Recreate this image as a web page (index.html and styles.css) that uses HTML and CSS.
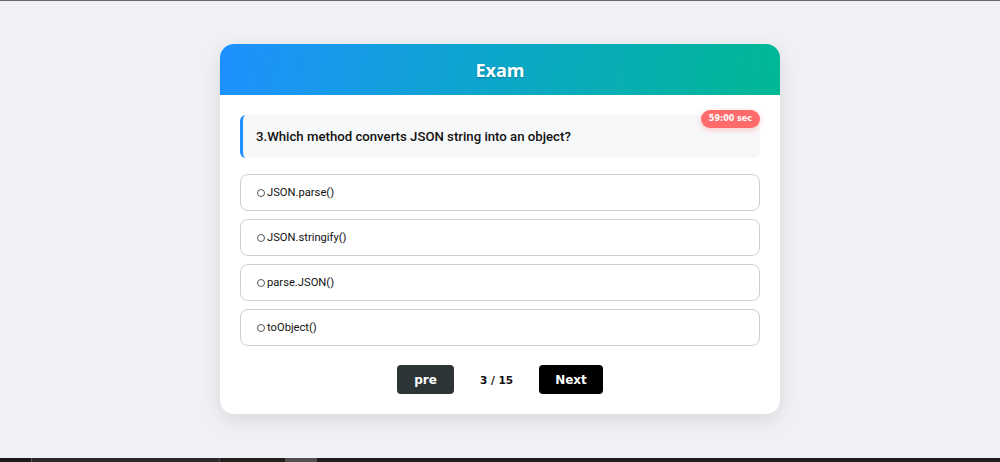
FILE: index.html
```html
<!DOCTYPE html>
<html>
<head>
<meta charset="utf-8">
<link rel="stylesheet" href="styles.css">
</head>
<body>
<div class="page">
  <div class="card">
    <div class="card-header">Exam</div>
    <div class="card-body">
      <span class="timer">59:00 sec</span>
      <div class="question">3.Which method converts JSON string into an object?</div>
      <div class="options">
        <label class="option"><span class="radio"></span>JSON.parse()</label>
        <label class="option"><span class="radio"></span>JSON.stringify()</label>
        <label class="option"><span class="radio"></span>parse.JSON()</label>
        <label class="option"><span class="radio"></span>toObject()</label>
      </div>
      <div class="nav">
        <button class="btn btn-pre">pre</button>
        <span class="count">3 / 15</span>
        <button class="btn btn-next">Next</button>
      </div>
    </div>
  </div>
</div>
<div class="taskbar">
  <span class="tb tb1"></span><span class="tb tb2"></span><span class="tb tb3"></span><span class="tb tb4"></span><span class="tb tb5"></span>
</div>
</body>
</html>
```
FILE: styles.css
```css
* { box-sizing: border-box; }
html, body { margin: 0; padding: 0; }
body {
  background: #f0f1f5;
  font-family: Roboto, "Noto Sans", sans-serif;
  height: 462px;
  display: flex;
  flex-direction: column;
  border-top: 1px solid #6a6a6a;
  overflow: hidden;
}
.page {
  flex: 1;
  display: flex;
  justify-content: center;
  align-items: flex-start;
  padding-top: 43px;
}
.card {
  width: 560px;
  background: #fff;
  border-radius: 14px;
  box-shadow: 0 6px 20px rgba(0, 0, 0, 0.10);
  overflow: hidden;
}
.card-header {
  height: 51px;
  display: flex;
  align-items: center;
  justify-content: center;
  background: linear-gradient(100deg, #1e90ff 0%, #0ea5cf 45%, #00b894 100%);
  color: #fff;
  font-family: "Open Sans", "Noto Sans", sans-serif;
  font-weight: 700;
  font-size: 18px;
  text-shadow: 0 1px 2px rgba(0, 0, 0, 0.25);
}
.card-body {
  position: relative;
  padding: 20px 20px 20px;
}
.timer {
  position: absolute;
  top: 15px;
  right: 20px;
  height: 18px;
  padding: 0 8px;
  border-radius: 9px;
  background: #ff6b6b;
  color: #fff;
  font-family: "DejaVu Sans", Verdana, sans-serif;
  font-weight: 700;
  font-size: 8px;
  line-height: 18px;
  box-shadow: 0 2px 6px rgba(255, 107, 107, 0.35);
}
.question {
  height: 43px;
  display: flex;
  align-items: center;
  padding: 0 13px;
  background: #f7f8fa;
  border-left: 3px solid #1e90ff;
  border-radius: 6px;
  font-size: 13.2px;
  font-weight: 500;
  color: #111;
}
.options {
  margin-top: 16px;
  display: flex;
  flex-direction: column;
  gap: 8px;
}
.option {
  height: 37px;
  display: flex;
  align-items: center;
  padding-left: 16px;
  border: 1px solid #cfcfcf;
  border-radius: 8px;
  font-size: 11.2px;
  color: #111;
}
.radio {
  width: 8px;
  height: 8px;
  border: 1px solid #555;
  border-radius: 50%;
  margin-right: 2px;
  flex: none;
}
.nav {
  margin-top: 19px;
  display: flex;
  justify-content: center;
  align-items: center;
  gap: 26px;
}
.btn {
  height: 29px;
  border: none;
  border-radius: 4px;
  color: #fff;
  font-family: "DejaVu Sans", Verdana, sans-serif;
  font-weight: 700;
  font-size: 12px;
  padding: 0;
}
.btn-pre { width: 57px; background: #2d3436; }
.btn-next { width: 64px; background: #000; }
.count {
  font-family: "DejaVu Sans", Verdana, sans-serif;
  font-weight: 700;
  font-size: 10.5px;
  color: #111;
}
.taskbar {
  height: 4px;
  background: #1f1f1f;
  display: flex;
}
.tb { height: 4px; }
.tb1 { width: 31px; background: #1a1a1a; }
.tb2 { width: 188px; background: #2a2a2a; border-left: 1px solid #555; }
.tb3 { width: 66px; background: #241e1e; border-left: 1px solid #444; }
.tb4 { width: 32px; background: #505050; }
.tb5 { flex: 1; background: #1c1c1c; }
```
